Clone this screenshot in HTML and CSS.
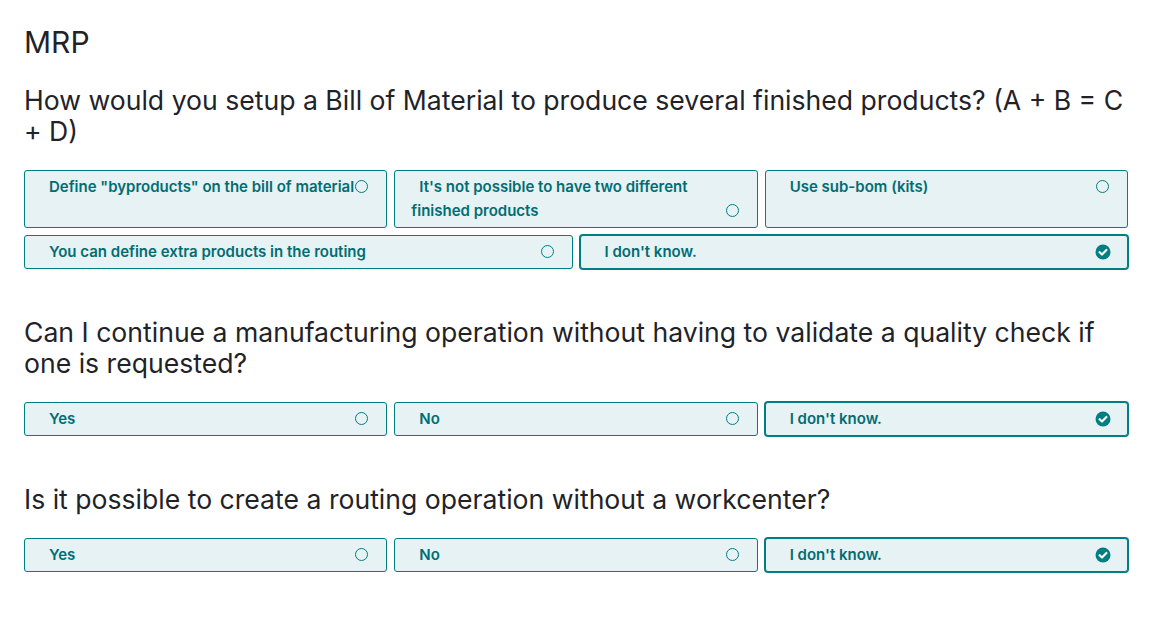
FILE: index.html
```html
<!DOCTYPE html>
<html>
<head>
<meta charset="utf-8">
<link rel="stylesheet" href="styles.css">
</head>
<body>
<div class="page">
  <h1 class="title">MRP</h1>

  <section class="question">
    <h2 class="q-text">How would you setup a Bill of Material to produce several finished products? (A + B = C + D)</h2>
    <div class="choices">
      <label class="choice third"><span class="txt">Define "byproducts" on the bill of material</span><i class="ico ring"></i></label>
      <label class="choice third"><span class="txt">It's not possible to have two different finished products</span><i class="ico ring"></i></label>
      <label class="choice third"><span class="txt">Use sub-bom (kits)</span><i class="ico ring"></i></label>
      <label class="choice half"><span class="txt">You can define extra products in the routing</span><i class="ico ring"></i></label>
      <label class="choice half selected"><span class="txt">I don't know.</span><i class="ico check"><svg viewBox="0 0 16 16" width="16" height="16"><circle cx="8" cy="8" r="7.5" fill="#017e84"/><path d="M4.6 8.2 L7 10.5 L11.4 6" fill="none" stroke="#fff" stroke-width="2.2" stroke-linecap="round" stroke-linejoin="round"/></svg></i></label>
    </div>
  </section>

  <section class="question">
    <h2 class="q-text">Can I continue a manufacturing operation without having to validate a quality check if one is requested?</h2>
    <div class="choices">
      <label class="choice third"><span class="txt">Yes</span><i class="ico ring"></i></label>
      <label class="choice third"><span class="txt">No</span><i class="ico ring"></i></label>
      <label class="choice third selected"><span class="txt">I don't know.</span><i class="ico check"><svg viewBox="0 0 16 16" width="16" height="16"><circle cx="8" cy="8" r="7.5" fill="#017e84"/><path d="M4.6 8.2 L7 10.5 L11.4 6" fill="none" stroke="#fff" stroke-width="2.2" stroke-linecap="round" stroke-linejoin="round"/></svg></i></label>
    </div>
  </section>

  <section class="question">
    <h2 class="q-text">Is it possible to create a routing operation without a workcenter?</h2>
    <div class="choices">
      <label class="choice third"><span class="txt">Yes</span><i class="ico ring"></i></label>
      <label class="choice third"><span class="txt">No</span><i class="ico ring"></i></label>
      <label class="choice third selected"><span class="txt">I don't know.</span><i class="ico check"><svg viewBox="0 0 16 16" width="16" height="16"><circle cx="8" cy="8" r="7.5" fill="#017e84"/><path d="M4.6 8.2 L7 10.5 L11.4 6" fill="none" stroke="#fff" stroke-width="2.2" stroke-linecap="round" stroke-linejoin="round"/></svg></i></label>
    </div>
  </section>
</div>
</body>
</html>
```

FILE: styles.css
```css
html, body {
  margin: 0;
  padding: 0;
  background: #ffffff;
}

body {
  font-family: Inter, "Noto Sans", "Liberation Sans", sans-serif;
  color: #1f2328;
}

.page {
  width: 1104px;
  margin-left: 24px;
  padding-top: 24px;
}

.title {
  margin: 0 0 25px 0;
  font-size: 30px;
  font-weight: 400;
  line-height: 36px;
}

.question {
  margin-bottom: 48px;
}

.q-text {
  margin: 0 0 23px 0;
  font-size: 26.6px;
  font-weight: 400;
  line-height: 31px;
}

.choices {
  display: flex;
  flex-wrap: wrap;
  gap: 7px;
}

.choice {
  box-sizing: border-box;
  display: block;
  border: 1px solid #017e84;
  border-radius: 3px;
  background: #e6f2f3;
  padding: 4px 16px;
  font-size: 15px;
  font-weight: 600;
  line-height: 24px;
  color: #016d73;
}

.choice.third {
  width: calc((100% - 14px) / 3);
}

.choice.half {
  width: calc((100% - 7px) / 2);
}

.choice.selected {
  box-shadow: 0 0 0 1px #017e84;
}

.txt {
  margin-left: 8px;
}

.ico {
  float: right;
  width: 16px;
  height: 16px;
  margin-top: 4px;
  position: relative;
}

.ico svg {
  display: block;
}

.ring::before {
  content: "";
  position: absolute;
  left: 1px;
  top: 1px;
  width: 11px;
  height: 11px;
  border: 1.5px solid #017e84;
  border-radius: 50%;
}
```
